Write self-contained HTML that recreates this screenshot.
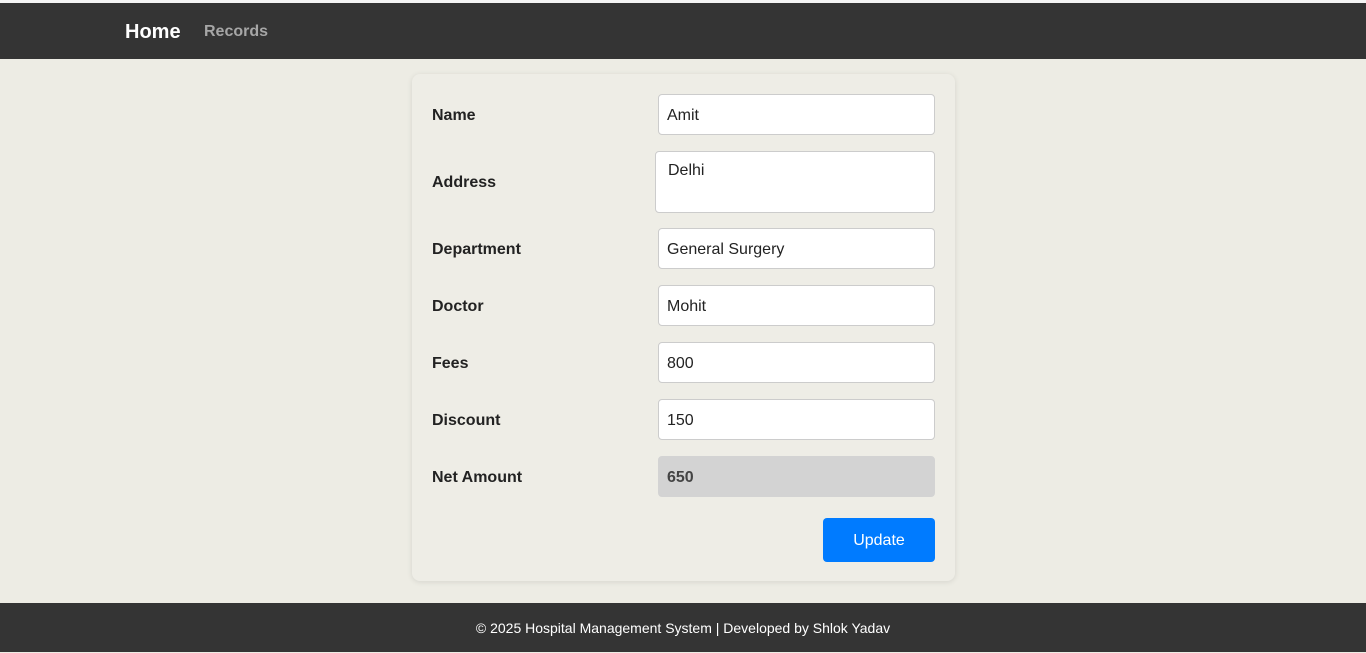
<!DOCTYPE html>
<html><head><style>
*{box-sizing:border-box;margin:0;padding:0}
body{width:1366px;height:652px;background:#edece4;font-family:"Liberation Sans",Arial,sans-serif;position:relative;overflow:hidden}
.top{position:absolute;left:0;top:0;width:1366px;height:3px;background:#f4f4f4}
nav{position:absolute;left:0;top:3px;width:1366px;height:56px;background:#343434}
nav .h{position:absolute;left:125px;top:18px;color:#fff;font-weight:bold;font-size:20px}
nav .r{position:absolute;left:204px;top:20px;color:#a6a6a6;font-weight:bold;font-size:16px}
.card{position:absolute;left:412px;top:74px;width:543px;height:507px;background:#eeede6;border-radius:8px;box-shadow:0 1px 6px rgba(0,0,0,.1)}
.lb{position:absolute;left:432px;font-weight:bold;font-size:16px;color:#222}
.in{position:absolute;left:658px;width:277px;height:41px;background:#fff;border:1px solid #ccc;border-radius:4px;font-size:16px;color:#222;padding:12px 0 0 8px}
.btn{position:absolute;left:823px;top:518px;width:112px;height:44px;background:#007bff;border-radius:4px;color:#fff;font-size:16px;text-align:center;line-height:45px}
footer{position:absolute;left:0;top:603px;width:1366px;height:49px;background:#343434;color:#fff;font-size:14px;text-align:center;line-height:50px}
</style></head><body>
<div class="top"></div>
<nav><span class="h">Home</span><span class="r">Records</span></nav>
<div class="card"></div>
<div class="lb" style="top:107px">Name</div><div class="in" style="top:94px">Amit</div>
<div class="lb" style="top:174px">Address</div><div class="in" style="top:151px;left:655px;width:280px;height:62px;padding:10px 0 0 12px">Delhi</div>
<div class="lb" style="top:241px">Department</div><div class="in" style="top:228px">General Surgery</div>
<div class="lb" style="top:298px">Doctor</div><div class="in" style="top:285px">Mohit</div>
<div class="lb" style="top:355px">Fees</div><div class="in" style="top:342px">800</div>
<div class="lb" style="top:412px">Discount</div><div class="in" style="top:399px">150</div>
<div class="lb" style="top:469px">Net Amount</div><div class="in" style="top:456px;background:#d3d3d3;border-color:#d3d3d3;font-weight:bold;color:#444">650</div>
<div class="btn">Update</div>
<footer>© 2025 Hospital Management System | Developed by Shlok Yadav</footer>
</body></html>
